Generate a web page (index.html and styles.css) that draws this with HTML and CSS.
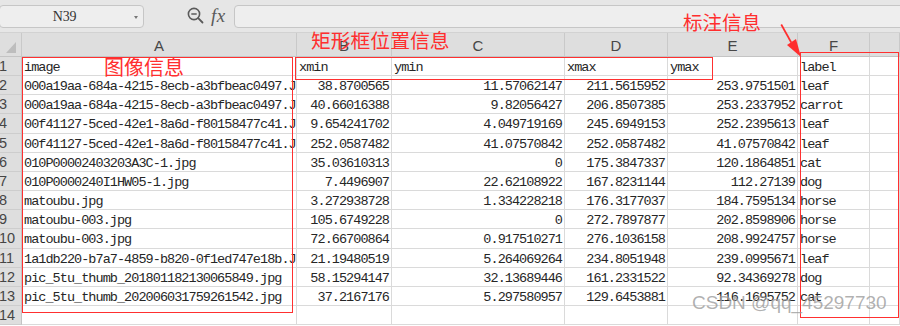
FILE: index.html
```html
<!DOCTYPE html>
<html lang="zh-CN">
<head>
<meta charset="utf-8">
<title>Sheet</title>
<link rel="stylesheet" href="styles.css">
</head>
<body>
<div class="sheet">
  <div class="toolbar">
    <div class="namebox"><span class="name">N39</span><span class="caret"></span></div>
    <svg class="zoom-ic" width="17" height="17" viewBox="0 0 17 17"><circle cx="7" cy="7" r="5.6" fill="none" stroke="#5a5a5a" stroke-width="1.6"/><line x1="4.3" y1="7" x2="9.7" y2="7" stroke="#5a5a5a" stroke-width="1.5"/><line x1="11.2" y1="11.2" x2="15.5" y2="15.5" stroke="#5a5a5a" stroke-width="1.8" stroke-linecap="round"/></svg>
    <span class="fx">fx</span>
    <div class="formula"></div>
  </div>

  <div class="grid">
    <div class="corner"><svg width="22" height="25" viewBox="0 0 22 25"><polygon points="6,20 16,20 16,9" fill="#bdbdbd"/></svg></div>
    <div class="ch">A</div><div class="ch">B</div><div class="ch">C</div><div class="ch">D</div><div class="ch">E</div><div class="ch">F</div><div class="ch"></div>

    <div class="rh">1</div><div class="c">image</div><div class="c">xmin</div><div class="c">ymin</div><div class="c">xmax</div><div class="c">ymax</div><div class="c">label</div><div class="c"></div>
    <div class="rh">2</div><div class="c">000a19aa-684a-4215-8ecb-a3bfbeac0497.JPG</div><div class="c n">38.8700565</div><div class="c n">11.57062147</div><div class="c n">211.5615952</div><div class="c n">253.9751501</div><div class="c">leaf</div><div class="c"></div>
    <div class="rh">3</div><div class="c">000a19aa-684a-4215-8ecb-a3bfbeac0497.JPG</div><div class="c n">40.66016388</div><div class="c n">9.82056427</div><div class="c n">206.8507385</div><div class="c n">253.2337952</div><div class="c">carrot</div><div class="c"></div>
    <div class="rh">4</div><div class="c">00f41127-5ced-42e1-8a6d-f80158477c41.JPG</div><div class="c n">9.654241702</div><div class="c n">4.049719169</div><div class="c n">245.6949153</div><div class="c n">252.2395613</div><div class="c">leaf</div><div class="c"></div>
    <div class="rh">5</div><div class="c">00f41127-5ced-42e1-8a6d-f80158477c41.JPG</div><div class="c n">252.0587482</div><div class="c n">41.07570842</div><div class="c n">252.0587482</div><div class="c n">41.07570842</div><div class="c">leaf</div><div class="c"></div>
    <div class="rh">6</div><div class="c">010P00002403203A3C-1.jpg</div><div class="c n">35.03610313</div><div class="c n">0</div><div class="c n">175.3847337</div><div class="c n">120.1864851</div><div class="c">cat</div><div class="c"></div>
    <div class="rh">7</div><div class="c">010P0000240I1HW05-1.jpg</div><div class="c n">7.4496907</div><div class="c n">22.62108922</div><div class="c n">167.8231144</div><div class="c n">112.27139</div><div class="c">dog</div><div class="c"></div>
    <div class="rh">8</div><div class="c">matoubu.jpg</div><div class="c n">3.272938728</div><div class="c n">1.334228218</div><div class="c n">176.3177037</div><div class="c n">184.7595134</div><div class="c">horse</div><div class="c"></div>
    <div class="rh">9</div><div class="c">matoubu-003.jpg</div><div class="c n">105.6749228</div><div class="c n">0</div><div class="c n">272.7897877</div><div class="c n">202.8598906</div><div class="c">horse</div><div class="c"></div>
    <div class="rh">10</div><div class="c">matoubu-003.jpg</div><div class="c n">72.66700864</div><div class="c n">0.917510271</div><div class="c n">276.1036158</div><div class="c n">208.9924757</div><div class="c">horse</div><div class="c"></div>
    <div class="rh">11</div><div class="c">1a1db220-b7a7-4859-b820-0f1ed747e18b.JPG</div><div class="c n">21.19480519</div><div class="c n">5.264069264</div><div class="c n">234.8051948</div><div class="c n">239.0995671</div><div class="c">leaf</div><div class="c"></div>
    <div class="rh">12</div><div class="c">pic_5tu_thumb_201801182130065849.jpg</div><div class="c n">58.15294147</div><div class="c n">32.13689446</div><div class="c n">161.2331522</div><div class="c n">92.34369278</div><div class="c">dog</div><div class="c"></div>
    <div class="rh">13</div><div class="c">pic_5tu_thumb_202006031759261542.jpg</div><div class="c n">37.2167176</div><div class="c n">5.297580957</div><div class="c n">129.6453881</div><div class="c n">116.1695752</div><div class="c">cat</div><div class="c"></div>
    <div class="rh">14</div><div class="c"></div><div class="c"></div><div class="c"></div><div class="c"></div><div class="c"></div><div class="c"></div><div class="c"></div>
  </div>

  <div class="mark box-a"></div>
  <div class="mark box-pos"></div>
  <div class="mark box-label"></div>
  <div class="note note-a">图像信息</div>
  <div class="note note-pos">矩形框位置信息</div>
  <div class="note note-label">标注信息</div>
  <svg class="arrow" width="40" height="40" viewBox="0 0 40 40"><polygon points="0.5,1 2,0 12,18 10.5,19" fill="#ff2e2e"/><polygon points="21,33 7,21 16,15" fill="#ff2e2e"/></svg>
  <div class="watermark">CSDN @qq_45297730</div>
</div>
</body>
</html>
```

FILE: styles.css
```css
* { box-sizing: border-box; }
html, body { margin: 0; padding: 0; background: #ffffff; }
body { width: 900px; height: 326px; overflow: hidden; }

.sheet {
  position: relative;
  width: 900px;
  height: 326px;
  overflow: hidden;
  font-family: "Liberation Sans", Arial, sans-serif;
}

.toolbar {
  height: 33px;
  background: #e6e6e6;
  border-bottom: 1px solid #d2d2d2;
  display: flex;
  align-items: flex-start;
  padding-top: 5px;
}
.namebox {
  width: 145px;
  height: 23px;
  margin-left: -1px;
  background: #eeeeee;
  border: 1px solid #c6c6c6;
  border-radius: 4px;
  display: flex;
  align-items: center;
  justify-content: center;
  position: relative;
}
.name {
  font-family: "Liberation Serif", serif;
  font-size: 14px;
  color: #333;
  letter-spacing: -0.2px;
  margin-left: -14px;
}
.caret {
  position: absolute;
  right: 5px;
  top: 10px;
  width: 0;
  height: 0;
  border-left: 2.5px solid transparent;
  border-right: 2.5px solid transparent;
  border-top: 3px solid #777;
}
.zoom-ic { margin-left: 43px; margin-top: 2px; }
.fx {
  font-family: "Liberation Serif", serif;
  font-style: italic;
  font-size: 19px;
  color: #5a5a5a;
  margin-left: 7px;
  line-height: 22px;
  letter-spacing: 0.5px;
}
.formula {
  margin-left: 8px;
  flex: 1;
  height: 23px;
  margin-right: -10px;
  background: #eeeeee;
  border: 1px solid #c6c6c6;
  border-radius: 4px;
}

.grid {
  display: grid;
  grid-template-columns: 22px 275px 95px 173px 103px 130px 72px 1fr;
  grid-template-rows: 24px repeat(14, 19.17px);
}
.corner, .ch {
  background: #dedede;
  border-right: 1px solid #c9c9c9;
  border-bottom: 1px solid #c4c4c4;
}
.ch {
  font-size: 15px;
  color: #474747;
  text-align: center;
  line-height: 25px;
}
.rh {
  background: #dedede;
  border-right: 1px solid #c4c4c4;
  border-bottom: 1px solid #cdcdcd;
  font-size: 14.5px;
  color: #454545;
  line-height: 19px;
  padding-left: 0;
  margin-left: -1px;
}
.c {
  border-right: 1px solid #dadada;
  border-bottom: 1px solid #dadada;
  font-family: "Liberation Mono", "Noto Sans CJK SC", monospace;
  font-size: 13.5px;
  letter-spacing: -0.95px;
  color: #262626;
  white-space: nowrap;
  overflow: hidden;
  line-height: 19px;
  padding: 1px 0 0 2px;
}
.c.n { text-align: right; padding-right: 2px; }

.mark {
  position: absolute;
  border: 1px solid #ff3030;
}
.box-a { left: 22px; top: 57px; width: 271px; height: 256px; }
.box-pos { left: 295px; top: 57px; width: 418px; height: 23px; }
.box-label { left: 800px; top: 52px; width: 99px; height: 266px; }

.note {
  position: absolute;
  font-family: "Noto Sans CJK SC", sans-serif;
  font-size: 20px;
  line-height: 20px;
  color: #ff2e2e;
  white-space: nowrap;
}
.note-a { left: 104px; top: 57px; }
.note-pos { left: 311px; top: 30px; font-size: 19.8px; }
.note-label { left: 683px; top: 12px; font-size: 19.5px; }

.arrow { position: absolute; left: 780px; top: 24px; }

.watermark {
  position: absolute;
  left: 692px;
  top: 292px;
  font-family: "Liberation Sans", Arial, sans-serif;
  font-size: 19px;
  color: rgba(110, 110, 110, 0.55);
  white-space: nowrap;
  text-shadow: 0 0 1px rgba(255,255,255,0.6);
}
```
